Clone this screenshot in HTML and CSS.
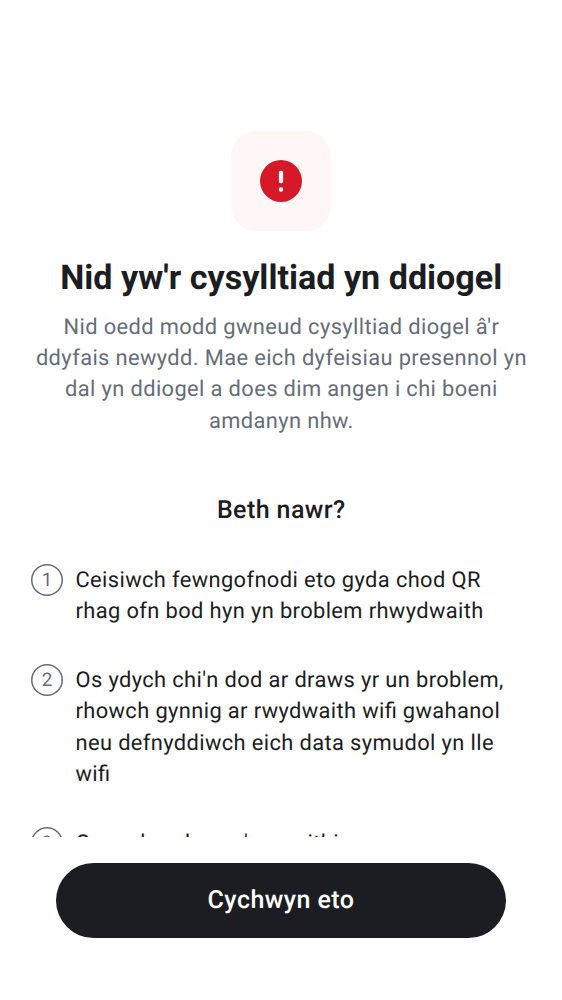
FILE: index.html
```html
<!DOCTYPE html>
<html lang="cy">
<head>
<meta charset="utf-8">
<title>Nid yw'r cysylltiad yn ddiogel</title>
<link rel="stylesheet" href="styles.css">
</head>
<body>
<main class="screen">
  <section class="content">
    <div class="badge">
      <svg class="badge-icon" viewBox="0 0 42 42"><circle cx="21" cy="21" r="21" fill="#d51928"/><rect x="18.9" y="10.8" width="4.2" height="12.4" rx="1.7" fill="#fff"/><circle cx="21" cy="29.5" r="2.2" fill="#fff"/></svg>
    </div>
    <h1 class="title">Nid yw'r cysylltiad yn ddiogel</h1>
    <p class="lead"><span class="line">Nid oedd modd gwneud cysylltiad diogel â'r</span><span class="line">ddyfais newydd. Mae eich dyfeisiau presennol yn</span><span class="line">dal yn ddiogel a does dim angen i chi boeni</span><span class="line">amdanyn nhw.</span></p>
    <h2 class="subtitle">Beth nawr?</h2>
    <ol class="steps">
      <li class="step"><span class="num">1</span><p class="text"><span class="line">Ceisiwch fewngofnodi eto gyda chod QR</span><span class="line">rhag ofn bod hyn yn broblem rhwydwaith</span></p></li>
      <li class="step"><span class="num">2</span><p class="text"><span class="line">Os ydych chi'n dod ar draws yr un broblem,</span><span class="line">rhowch gynnig ar rwydwaith wi<span class="joined">fi</span> gwahanol</span><span class="line">neu defnyddiwch eich data symudol yn lle</span><span class="line">wi<span class="joined">fi</span></span></p></li>
      <li class="step"><span class="num">3</span><p class="text"><span class="line">Os nad yw hynny'n gweithio,</span></p></li>
    </ol>
  </section>
  <footer class="footer"><button class="button">Cychwyn eto</button></footer>
</main>
</body>
</html>
```
FILE: styles.css
```css
* { box-sizing: border-box; margin: 0; padding: 0; }
body { font-family: Roboto, sans-serif; background: #fff; color: #1b1d22; text-rendering: geometricPrecision; }
.screen { width: 562px; height: 1000px; display: flex; flex-direction: column; overflow: hidden; }
.content { height: 837px; padding-top: 131px; overflow: hidden; flex: none; }
.badge { width: 100px; height: 100px; margin: 0 auto; border-radius: 25px; background: #fff7f6; display: flex; align-items: center; justify-content: center; }
.badge-icon { width: 42px; height: 42px; }
.title { margin-top: 26px; padding-left: 0.6px; font-size: 34.12px; line-height: 42px; font-weight: 700; text-align: center; white-space: nowrap; }
.lead { margin-top: 12.8px; padding-left: 0.8px; font-size: 21.875px; line-height: 31.25px; letter-spacing: 0.375px; color: #656d77; text-align: center; }
.line { display: block; white-space: nowrap; }
.joined { letter-spacing: 0; }
.subtitle { margin-top: 57.2px; padding-left: 0.5px; font-size: 25px; line-height: 34px; font-weight: 500; letter-spacing: 0.41px; text-align: center; }
.steps { list-style: none; margin-top: 35.8px; padding-left: 31px; display: flex; flex-direction: column; gap: 36.5px; }
.step { display: flex; gap: 12.5px; }
.num { flex: none; width: 32px; height: 32px; box-shadow: inset 0 0 0 1.5px #656d77; border-radius: 50%; color: #656d77; font-size: 18.75px; line-height: 32px; text-align: center; }
.text { padding-top: 1.2px; font-size: 21.875px; line-height: 31.25px; letter-spacing: 0.38px; }
.footer { padding: 25.5px 56px 0; display: flex; }
.button { width: 450px; height: 75px; padding-top: 2px; border: 0; border-radius: 38px; background: #1b1d22; color: #fff; font: 500 25px/34px Roboto, sans-serif; letter-spacing: 0.45px; text-rendering: inherit; }
```
